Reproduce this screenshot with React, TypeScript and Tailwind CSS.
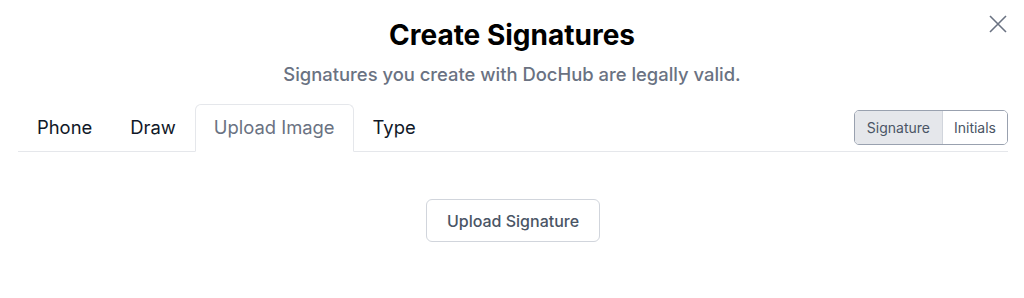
const tabs = ["Phone", "Draw", "Upload Image", "Type"];

export default function App() {
  const active = "Upload Image";
  return (
    <div className="relative h-[298px] w-[1024px] bg-white font-['Inter',sans-serif]">
      <button className="absolute right-[17px] top-[15px] text-gray-500">
        <svg width="18" height="18" viewBox="0 0 18 18" fill="none" stroke="currentColor" strokeWidth="1.6">
          <path d="M1 1L17 17M17 1L1 17" />
        </svg>
      </button>

      <h2 className="pt-[17px] text-center text-[28px] font-bold leading-9 text-black">
        Create Signatures
      </h2>
      <p className="mt-[9px] text-center text-[18.4px] font-medium leading-6 text-gray-500">
        Signatures you create with DocHub are legally valid.
      </p>

      <div className="ml-[18px] mr-[16px] mt-[18px] flex items-center justify-between border-b border-gray-200">
        <div className="flex">
          {tabs.map((t) => (
            <div
              key={t}
              className={
                t === active
                  ? "-mb-px flex h-[48px] items-center rounded-t-md border border-gray-200 border-b-white bg-white px-[18px] text-[18.4px] text-gray-500"
                  : "-mb-px flex h-[48px] items-center border border-transparent px-[18px] text-[18.4px] text-gray-900"
              }
            >
              {t}
            </div>
          ))}
        </div>
        <div className="flex h-[35px] overflow-hidden rounded-[5px] border border-gray-400 text-[14px] text-gray-600">
          <button className="flex items-center bg-gray-200 px-[12px]">Signature</button>
          <button className="flex items-center border-l border-gray-300 bg-white px-[11px]">Initials</button>
        </div>
      </div>

      <div className="mt-[47px] flex justify-center pl-[2px]">
        <button className="h-[43px] rounded-md border border-gray-300 bg-white px-[20px] text-[16px] font-medium text-gray-600">
          Upload Signature
        </button>
      </div>
    </div>
  );
}
